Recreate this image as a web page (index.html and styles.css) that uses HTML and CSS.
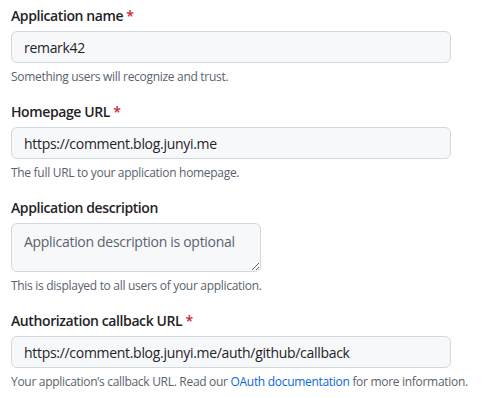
FILE: index.html
```html
<!DOCTYPE html>
<html lang="en">
<head>
<meta charset="utf-8">
<title>Register a new OAuth application</title>
<link rel="stylesheet" href="styles.css">
</head>
<body>
<form class="oauth-form">
  <div class="form-group">
    <label class="form-label" for="app-name">Application name <span class="req">*</span></label>
    <input class="form-control" id="app-name" type="text" value="remark42">
    <p class="note">Something users will recognize and trust.</p>
  </div>
  <div class="form-group">
    <label class="form-label" for="homepage">Homepage URL <span class="req">*</span></label>
    <input class="form-control" id="homepage" type="text" value="https://comment.blog.junyi.me">
    <p class="note">The full URL to your application homepage.</p>
  </div>
  <div class="form-group">
    <label class="form-label" for="desc">Application description</label>
    <textarea class="form-control textarea" id="desc" placeholder="Application description is optional"></textarea>
    <p class="note">This is displayed to all users of your application.</p>
  </div>
  <div class="form-group">
    <label class="form-label" for="callback">Authorization callback URL <span class="req">*</span></label>
    <input class="form-control" id="callback" type="text" value="https://comment.blog.junyi.me/auth/github/callback">
    <p class="note">Your application’s callback URL. Read our <a href="#" class="link">OAuth documentation</a> for more information.</p>
  </div>
</form>
</body>
</html>
```

FILE: styles.css
```css
html, body {
  margin: 0;
  padding: 0;
  background: #ffffff;
}
body {
  font-family: "Open Sans", "Noto Sans", "Liberation Sans", sans-serif;
  color: #1f2328;
  font-size: 14px;
  letter-spacing: -0.3px;
}
.oauth-form {
  padding: 6px 11px 0 11px;
  display: flex;
  flex-direction: column;
}
.form-group {
  display: flex;
  flex-direction: column;
  align-items: flex-start;
  margin-bottom: 16px;
}
.form-label {
  font-weight: 600;
  font-size: 14px;
  line-height: 20px;
  letter-spacing: -0.4px;
  margin-bottom: 5px;
}
.req {
  color: #d1242f;
  letter-spacing: 0;
}
.form-control {
  box-sizing: border-box;
  width: 440px;
  height: 32px;
  padding: 5px 12px;
  font-family: inherit;
  font-size: 14px;
  line-height: 20px;
  letter-spacing: -0.3px;
  color: #1f2328;
  background: #f6f8fa;
  border: 1px solid #d1d9e0;
  border-radius: 6px;
  outline: none;
  margin: 0;
}
.textarea {
  width: 250px;
  height: 49px;
  resize: both;
  padding: 8px 12px;
}
.textarea::placeholder {
  color: #59636e;
  opacity: 1;
}
.note {
  margin: 5px 0 0 0;
  font-size: 12px;
  line-height: 18px;
  letter-spacing: -0.3px;
  color: #59636e;
}
.link {
  color: #0969da;
  text-decoration: none;
}
```
